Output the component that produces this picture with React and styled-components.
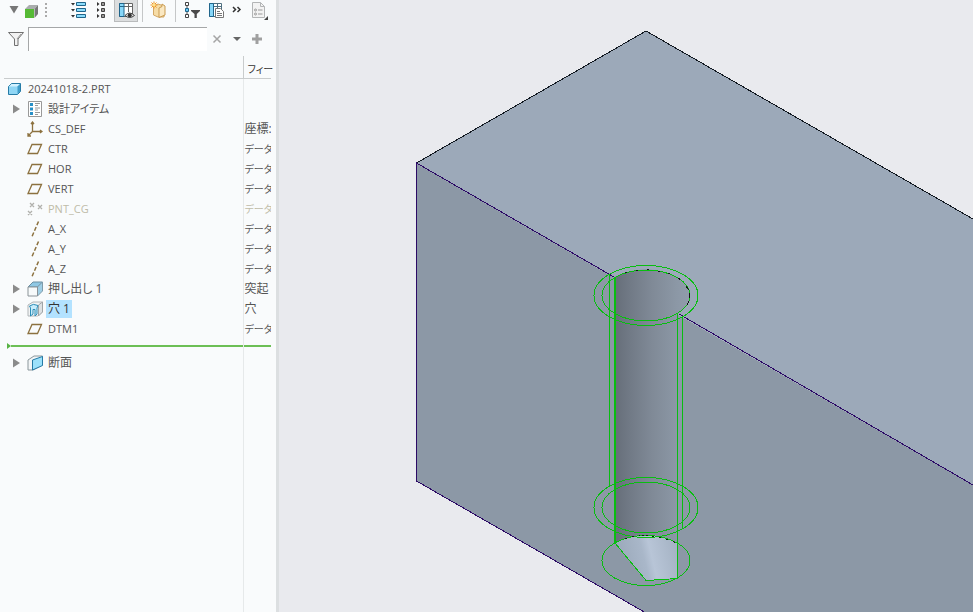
import styled, { createGlobalStyle } from 'styled-components';

const GlobalStyle = createGlobalStyle`
  * {
    box-sizing: border-box;
  }

  body {
    margin: 0;
    background: #e9eaee;
    font-family: 'Open Sans', 'Noto Sans CJK JP', sans-serif;
    font-size: 12px;
    color: #555;
  }
`;

const Layout = styled.div`
  display: flex;
  height: 100vh;
  overflow: hidden;
`;

const Sidebar = styled.aside`
  display: flex;
  flex-direction: column;
  flex: 0 0 279px;
  background: #f9fbfc;
  border-right: 3px solid #dcdfe1;
  padding-right: 5px;
  overflow: hidden;
`;

const Toolbar = styled.div`
  display: flex;
  flex: none;
  height: 22px;
  padding-left: 7px;
`;

const ToolGroup = styled.div`
  display: flex;
  margin-right: ${({ $gap }) => $gap || 0}px;
`;

const ToolButton = styled.button`
  display: flex;
  align-items: flex-start;
  justify-content: center;
  flex: none;
  width: ${({ $width }) => $width || 24}px;
  height: 22px;
  padding: 0;
  border: 1px solid ${({ $active }) => ($active ? '#b9bbbc' : 'transparent')};
  border-top: none;
  background: ${({ $active }) => ($active ? '#dcdedf' : 'transparent')};
`;

const Separator = styled.span`
  flex: none;
  width: 1px;
  height: 22px;
  margin: 0 4px;
  background: #c5c7c8;
`;

const SearchRow = styled.div`
  display: flex;
  flex: none;
  align-items: center;
  height: 34px;
  padding: 0 4px 0 8px;
`;

const SearchInput = styled.input`
  flex: 1;
  min-width: 0;
  height: 24px;
  margin-left: 4px;
  padding: 0 4px;
  border: none;
  border-top: 1px solid #a5a7a8;
  border-left: 1px solid #a5a7a8;
  background: #fff;
  font: inherit;
  outline: none;
`;

const SearchButton = styled.button`
  display: flex;
  align-items: center;
  justify-content: center;
  width: 20px;
  height: 24px;
  padding: 0;
  border: none;
  background: none;
`;

const TreePane = styled.div`
  flex: 1;
  min-height: 0;
  padding-left: 4px;
`;

const Tree = styled.table`
  width: 100%;
  height: 100%;
  border-collapse: collapse;
  table-layout: fixed;
  font-feature-settings: 'palt';
`;

const HeadCell = styled.th`
  width: ${({ $width }) => $width || 'auto'};
  height: 22px;
  padding: 4px 0 0 4px;
  border-bottom: 1px solid #c9cccd;
  border-left: ${({ $divided }) => ($divided ? '1px solid #c9cccd' : 'none')};
  font-size: 10px;
  font-weight: 400;
  line-height: 16px;
  text-align: left;
  color: #333;
  white-space: nowrap;
`;

const Cell = styled.td`
  height: 20px;
  padding: 0;
  white-space: nowrap;
  color: ${({ $muted }) => ($muted ? '#bfbba8' : '#555')};
`;

const TypeCell = styled(Cell)`
  padding-left: 1px;
  border-left: 1px solid #e6e9ea;
  font-size: ${({ $kana }) => ($kana ? 10 : 12)}px;
  line-height: 18px;
  overflow: hidden;
`;

const InsertCell = styled.td`
  height: 14px;
  padding: 0 0 0 ${({ $marker }) => ($marker ? 3 : 0)}px;
  border-left: ${({ $marker }) => ($marker ? 'none' : '1px solid #e6e9ea')};
`;

const InsertLine = styled.div`
  display: flex;
  align-items: center;
  height: 6px;

  &::before {
    content: '';
    display: ${({ $marker }) => ($marker ? 'block' : 'none')};
    border: 3px solid transparent;
    border-left: 4px solid #58b344;
    border-right: none;
  }

  &::after {
    content: '';
    flex: 1;
    height: 2px;
    background: #6cbf55;
  }
`;

const FillerCell = styled.td`
  padding: 0;
  border-left: ${({ $divided }) => ($divided ? '1px solid #e6e9ea' : 'none')};
`;

const Item = styled.div`
  display: flex;
  align-items: center;
  height: 20px;
  padding-left: ${({ $root }) => ($root ? 1 : 7)}px;
`;

const Expander = styled.button`
  width: 14px;
  height: 16px;
  padding: 0;
  border: none;
  background: none;
  display: flex;
  align-items: center;
`;

const IconBox = styled.span`
  display: flex;
  justify-content: flex-end;
  width: 18px;
  margin-right: 3px;
`;

const Label = styled.span`
  padding: 0 2px;
  font-size: ${({ $small }) => ($small ? 11 : 12)}px;
  line-height: 18px;
  background: ${({ $selected }) => ($selected ? '#b3e2ff' : 'transparent')};
  color: ${({ $selected }) => ($selected ? '#333' : 'inherit')};
`;

const Viewport = styled.main`
  flex: 1;
  min-width: 0;
`;

const Drawing = styled.svg`
  display: block;
  width: 100%;
  height: 100%;
`;

const Glyph = styled.svg`
  display: block;
  flex: none;
`;

const Svg = ({ size = 16, children }) => (
  <Glyph width={size} height={size} viewBox={`0 0 ${size} ${size}`} fill="none" aria-hidden="true">
    {children}
  </Glyph>
);

const PlaneIcon = () => (
  <Svg>
    <path d="M5 3.500H14.500L10.500 12.500H1Z" stroke="#8c713f" strokeWidth="1.300" />
  </Svg>
);

const AxisIcon = () => (
  <Svg>
    <path d="M11.500 0.500L5 15.500" stroke="#8c713f" strokeWidth="1.500" strokeDasharray="4 2" />
  </Svg>
);

const CsysIcon = () => (
  <Svg>
    <path
      d="M5.500 1V10.500H15M5.500 10.500L1 15M4 3L5.500 1L7 3M13 9L15 10.500L13 12M1 12V15H4"
      stroke="#8c713f"
      strokeWidth="1.300"
    />
  </Svg>
);

const PointIcon = () => (
  <Svg>
    <path
      d="M3 2l4 4m0-4l-4 4M11 4l4 4m0-4l-4 4M1 10l4 4m0-4l-4 4"
      stroke="#b0b0ac"
      strokeWidth="1.300"
    />
  </Svg>
);

const PartIcon = () => (
  <Svg>
    <path d="M1.500 5.500L4.500 2.500H13.500V10.500L10.500 13.500H1.500Z" fill="#8fd6f5" stroke="#267ba6" />
    <path d="M2 5.500L4.500 3H13L10.500 5.500Z" fill="#d2f1ff" />
    <path d="M10.500 5.500L13 3V10.500L10.500 13Z" fill="#3e9cc9" />
  </Svg>
);

const DesignIcon = () => (
  <Svg>
    <path d="M1.500 0.500H14.500V15.500H1.500Z" fill="#fff" stroke="#999" />
    <path d="M3 2h3v3H3zM3 6.500h3v3H3zM3 11h3v3H3z" fill="#2890c7" />
    <path d="M8 2.500h5M8 4.500h3M8 7h5M8 9h3M8 11.500h5M8 13.500h3" stroke="#999" />
  </Svg>
);

const ExtrudeIcon = () => (
  <Svg>
    <path d="M1 6L6 1H15.500L10.500 6Z" fill="#8fc8e4" stroke="#6b8fa3" />
    <path d="M10.500 6L15.500 1V10L10.500 15Z" fill="#9fcfe6" stroke="#7f9cab" />
    <path d="M1 6H10.500V15H1Z" fill="#f7fafb" stroke="#8b9398" />
  </Svg>
);

const HoleIcon = () => (
  <Svg>
    <path d="M1 4L6 1H15.500V11L10.500 15H1Z" fill="#f2f4f5" stroke="#b0b5b8" />
    <path d="M11.500 4L15.500 1V11L11.500 15Z" fill="#dde1e3" stroke="#a0a5a8" />
    <path
      d="M3.500 15V7L2.500 5Q6 2 11 4.500L10 7V13L8 15V8.500H6V13Z"
      fill="#c9edfc"
      stroke="#2d8eb8"
    />
  </Svg>
);

const SectionIcon = () => (
  <Svg>
    <path d="M1 5L7 1H15.500V10L6 15H1Z" fill="#f2f5f6" stroke="#8b979c" />
    <path d="M5.500 5L15.500 1.500V10.500L5.500 15Z" fill="#9be1fb" stroke="#267ba6" />
  </Svg>
);

const rows = [
  { name: '20241018-2.PRT', icon: PartIcon, type: '', root: true, small: true },
  { name: '設計アイテム', icon: DesignIcon, type: '', expandable: true, small: true },
  { name: 'CS_DEF', icon: CsysIcon, type: '座標:', small: true },
  { name: 'CTR', icon: PlaneIcon, type: 'データ', small: true },
  { name: 'HOR', icon: PlaneIcon, type: 'データ', small: true },
  { name: 'VERT', icon: PlaneIcon, type: 'データ', small: true },
  { name: 'PNT_CG', icon: PointIcon, type: 'データ', small: true, muted: true },
  { name: 'A_X', icon: AxisIcon, type: 'データ', small: true },
  { name: 'A_Y', icon: AxisIcon, type: 'データ', small: true },
  { name: 'A_Z', icon: AxisIcon, type: 'データ', small: true },
  { name: '押し出し 1', icon: ExtrudeIcon, type: '突起', expandable: true },
  { name: '穴 1', icon: HoleIcon, type: '穴', expandable: true, selected: true },
  { name: 'DTM1', icon: PlaneIcon, type: 'データ', small: true },
];

const TreeRow = ({ name, icon: Icon, type, root, small, expandable, selected, muted }) => (
  <tr>
    <Cell $muted={muted}>
      <Item $root={root}>
        {!root && (
          <Expander as={expandable ? 'button' : 'span'} aria-label={expandable ? name : undefined}>
            {expandable && (
              <Svg size={10}>
                <path d="M2 0.500L9 5L2 9.500Z" fill="#8b8b8b" />
              </Svg>
            )}
          </Expander>
        )}
        <IconBox>
          <Icon />
        </IconBox>
        <Label $small={small} $selected={selected}>
          {name}
        </Label>
      </Item>
    </Cell>
    <TypeCell $kana={type === 'データ'} $muted={muted}>
      {type}
    </TypeCell>
  </tr>
);

const ModelToolbar = () => (
  <Toolbar>
    <ToolGroup $gap={15}>
      <ToolButton $width={14} aria-label="Menu">
        <Svg size={20}>
          <path d="M5.500 6H14.500L10 13.500Z" fill="#777" />
        </Svg>
      </ToolButton>
      <ToolButton $width={20} aria-label="Model">
        <Svg size={20}>
          <path d="M4 9L8 5H17L13.500 9Z" fill="#a9adad" />
          <path d="M13.500 9L17 5V14L13.500 18Z" fill="#777" />
          <path d="M4 9H13V18H4Z" fill="#56ba35" />
        </Svg>
      </ToolButton>
      <ToolButton $width={10} aria-label="Handle">
        <Svg size={20}>
          <path d="M10 3v15" stroke="#aaa" strokeWidth="2" strokeDasharray="2 2" />
        </Svg>
      </ToolButton>
    </ToolGroup>
    <ToolGroup>
      <ToolButton aria-label="Expand all">
        <Svg size={20}>
          <path
            d="M8.500 2.500h9v3h-9zM8.500 8.500h9v3h-9zM8.500 14.500h9v3h-9z"
            fill="#8bdcfb"
            stroke="#20658b"
          />
          <path d="M3 3h4L5 5.500zM3 9h4L5 11.500zM3 15h4L5 17.500z" fill="#333" />
        </Svg>
      </ToolButton>
      <ToolButton aria-label="Collapse all">
        <Svg size={20}>
          <path
            d="M9.500 2.500h3v3h-3zM9.500 8.500h3v3h-3zM9.500 14.500h3v3h-3z"
            fill="#999"
            stroke="#444"
          />
          <path d="M5 2v4l2.500-2zM5 8v4l2.500-2zM5 14v4l2.500-2z" fill="#333" />
        </Svg>
      </ToolButton>
      <ToolButton $active aria-label="Tree columns">
        <Svg size={20}>
          <path d="M3.500 3.500H16.500V16.500H3.500Z" fill="#fff" stroke="#666" />
          <path d="M12.500 3.500V12M8 6.500H16.500" stroke="#666" />
          <path d="M3.500 3.500H8V16.500H3.500Z" fill="#87d7f9" stroke="#20658b" />
          <path d="M3.500 6.500H8" stroke="#20658b" />
          <path d="M9 15.500Q13.500 10.500 18.500 15.500Q13.500 19.500 9 15.500Z" fill="#ddd" stroke="#444" />
          <circle cx="13.700" cy="15.200" r="2" fill="#333" />
        </Svg>
      </ToolButton>
    </ToolGroup>
    <Separator />
    <ToolButton aria-label="Show layers">
      <Svg size={20}>
        <path d="M4.500 6L9 4L15 6V17H9L4.500 15Z" fill="#f6dca6" stroke="#d3a866" />
        <path d="M10 8L13 6.500V4L16 6V15L10 17.500Z" fill="#fae8c2" stroke="#c99b50" />
        <path d="M5 1.500V8.500M1.500 5H8.500M2.500 2.500L7.500 7.500M7.500 2.500L2.500 7.500" stroke="#ef9324" />
        <circle cx="5" cy="5" r="1.500" fill="#ffe38a" />
      </Svg>
    </ToolButton>
    <Separator />
    <ToolButton aria-label="Tree filters">
      <Svg size={20}>
        <path d="M5 5V15" stroke="#555" />
        <path d="M3.500 2.500h3v3h-3zM3.500 14.500h3v3h-3z" fill="#fff" stroke="#444" />
        <path d="M3.500 8.500h3v3h-3z" fill="#6ccdf5" stroke="#20658b" />
        <path d="M9 10H18V11L14.800 14V18H12.500V14L9 11Z" fill="#4a4a4a" />
      </Svg>
    </ToolButton>
    <ToolButton aria-label="Column display">
      <Svg size={20}>
        <path d="M3.500 3.500H15.500V16.500H3.500Z" fill="#fff" stroke="#4e6f80" />
        <path d="M3.500 6.500H15.500M11.500 3.500V8" stroke="#4e6f80" />
        <path d="M3.500 3.500H7.500V16.500H3.500Z" fill="#87d7f9" stroke="#20658b" />
        <path d="M9.500 8.500H14.500L17.500 11.500V17.500H9.500Z" fill="#fff" stroke="#777" />
        <path d="M11 11.500h3M11 13.500h5M11 15.500h5" stroke="#777" />
      </Svg>
    </ToolButton>
    <ToolButton $width={18} aria-label="More">
      <Svg size={20}>
        <path d="M6 7L8.500 9.500L6 12M10.500 7L13 9.500L10.500 12" stroke="#333" strokeWidth="1.500" />
      </Svg>
    </ToolButton>
    <ToolButton aria-label="Settings">
      <Svg size={20}>
        <path d="M4.500 2.500H12.500L16.500 6.500V17.500H4.500Z" fill="#f3f3f3" stroke="#b3b5b6" />
        <path d="M12.500 2.500V6.500H16.500" stroke="#b3b5b6" />
        <circle cx="7.500" cy="10" r="1" stroke="#999" />
        <circle cx="7.500" cy="14" r="1" stroke="#999" />
        <path d="M10 10h4.500M10 14h4.500" stroke="#999" />
        <path d="M20 16V20H16Z" fill="#444" />
      </Svg>
    </ToolButton>
  </Toolbar>
);

const Search = () => (
  <SearchRow>
    <Svg>
      <path d="M0.500 1.500H15.500L10 8V14.500H6.500V8Z" fill="#f2f2f2" stroke="#707070" />
      <path d="M9 8L13 3" stroke="#999" />
    </Svg>
    <SearchInput aria-label="Search" />
    <SearchButton aria-label="Clear">
      <Svg size={10}>
        <path d="M1.500 1.500L8.500 8.500M8.500 1.500L1.500 8.500" stroke="#a5a5a5" strokeWidth="1.500" />
      </Svg>
    </SearchButton>
    <SearchButton aria-label="Search options">
      <Svg size={10}>
        <path d="M1 3H9L5 7Z" fill="#666" />
      </Svg>
    </SearchButton>
    <SearchButton aria-label="Add">
      <Svg size={12}>
        <path d="M6 1V11M1 6H11" stroke="#a0a0a0" strokeWidth="3" />
      </Svg>
    </SearchButton>
  </SearchRow>
);

const Model = () => (
  <Drawing
    viewBox="279 0 694 612"
    preserveAspectRatio="xMinYMin slice"
    role="img"
    aria-label="Model"
    fill="none"
  >
    <defs>
      <linearGradient id="bore" x1="615" x2="690" y1="0" y2="0" gradientUnits="userSpaceOnUse">
        <stop offset="0" stopColor="#666e79" />
        <stop offset="0.200" stopColor="#717a86" />
        <stop offset="0.500" stopColor="#808a97" />
        <stop offset="0.830" stopColor="#8c98a6" />
        <stop offset="1" stopColor="#909cab" />
      </linearGradient>
      <linearGradient id="cone" x1="615" x2="678" y1="570" y2="555" gradientUnits="userSpaceOnUse">
        <stop offset="0" stopColor="#97a5b6" />
        <stop offset="0.480" stopColor="#a9b7c9" />
        <stop offset="0.600" stopColor="#b8c5d7" />
        <stop offset="1" stopColor="#a5b3c4" />
      </linearGradient>
    </defs>

    <path d="M416 163L973 485V801L416 481Z" fill="#8c98a6" />
    <path d="M416 163L646 31L973 219V485Z" fill="#9ca9b9" />

    <path d="M615 277A44 25.500 0 0 1 690 296Q690 305 678 314V543Q646 527 615 543Z" fill="url(#bore)" />
    <path d="M615 543Q646 527 678 543V578L646 581Z" fill="url(#cone)" />

    <g shapeRendering="crispEdges">
      <path d="M416.500 163L646 31L973 219" stroke="#111820" />
      <path d="M614 277L416.500 163V481L646 613M679 314L973 485" stroke="#2c0a66" />
      <g stroke="#08be10">
        <ellipse cx="646" cy="295.500" rx="52" ry="30" />
        <ellipse cx="646" cy="295.500" rx="44" ry="25.500" />
        <ellipse cx="646" cy="507.500" rx="52" ry="30" />
        <ellipse cx="646" cy="507.500" rx="44" ry="25.500" />
        <ellipse cx="646" cy="560.500" rx="44" ry="25" />
        <path d="M609.500 274V486M677.500 314V578.500M682.500 316V529" />
        <path d="M615 277V543" strokeWidth="2" />
        <path d="M615 543L646 580.500L677.500 578.500" />
      </g>
      <path d="M625 273A44 25.500 0 0 1 686 285" stroke="#101a14" strokeDasharray="2 9" />
      <path d="M686 286Q694 297 685 308" stroke="#101a14" strokeDasharray="5 3" />
      <path d="M625 539Q646 531 677 543" stroke="#101a14" strokeDasharray="2 5" />
      <path d="M642 535H650" stroke="#101a14" strokeDasharray="2 2" />
    </g>
  </Drawing>
);

const App = () => (
  <>
    <GlobalStyle />
    <Layout>
      <Sidebar>
        <ModelToolbar />
        <Search />
        <TreePane>
          <Tree>
            <thead>
              <tr>
                <HeadCell $width="239px" aria-label="Model tree" />
                <HeadCell $divided>フィー</HeadCell>
              </tr>
            </thead>
            <tbody>
              {rows.map((row) => (
                <TreeRow key={row.name} {...row} />
              ))}
              <tr>
                <InsertCell $marker>
                  <InsertLine $marker />
                </InsertCell>
                <InsertCell>
                  <InsertLine />
                </InsertCell>
              </tr>
              <TreeRow name="断面" icon={SectionIcon} type="" expandable />
              <tr>
                <FillerCell />
                <FillerCell $divided />
              </tr>
            </tbody>
          </Tree>
        </TreePane>
      </Sidebar>
      <Viewport>
        <Model />
      </Viewport>
    </Layout>
  </>
);

export default App;
